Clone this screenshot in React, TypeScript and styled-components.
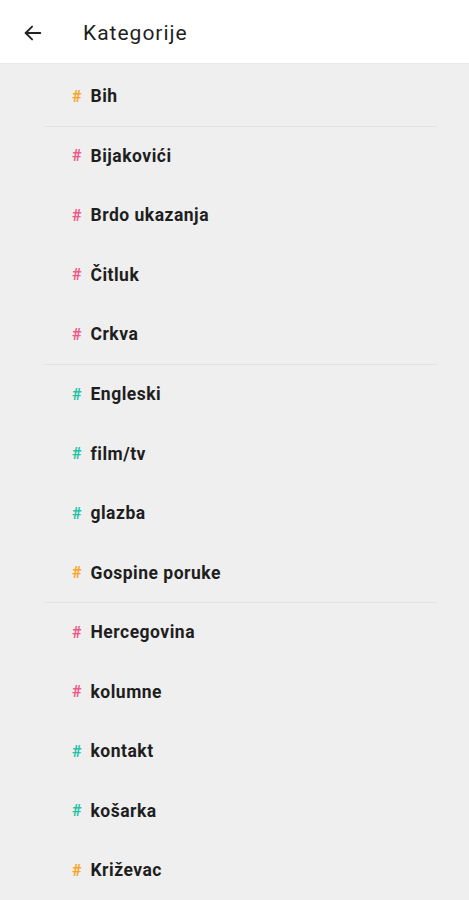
import React from "react";
import styled, { createGlobalStyle } from "styled-components";

const Global = createGlobalStyle`
  html, body { margin: 0; padding: 0; background: #efefef; }
  body { font-family: Roboto, "Noto Sans", "Liberation Sans", sans-serif; }
`;

const Page = styled.div`
  width: 469px;
  min-height: 900px;
  background: #efefef;
  display: flex;
  flex-direction: column;
`;

const Header = styled.header`
  height: 64px;
  background: #ffffff;
  display: flex;
  align-items: center;
  padding: 2px 0 0 20px;
  box-sizing: border-box;
  border-bottom: 1px solid #e9e9e9;
`;

const BackButton = styled.button`
  width: 26px;
  height: 26px;
  padding: 0;
  border: none;
  background: none;
  display: flex;
  align-items: center;
  justify-content: center;
  margin-right: 37px;
`;

const Title = styled.h1`
  margin: 0;
  font-size: 21px;
  font-weight: 400;
  color: #1f1f1f;
  letter-spacing: 1px;
`;

const List = styled.ul`
  list-style: none;
  margin: 0;
  padding: 3px 0 0 0;
  display: flex;
  flex-direction: column;
`;

const Row = styled.li<{ $divider?: boolean }>`
  height: 59.55px;
  margin: 0 32px 0 44px;
  padding-left: 28px;
  box-sizing: border-box;
  display: flex;
  align-items: center;
  border-bottom: 1px solid ${(p) => (p.$divider ? "#e3e3e3" : "transparent")};
`;

const Hash = styled.span<{ $color: string }>`
  color: ${(p) => p.$color};
  font-size: 16px;
  font-weight: 700;
  margin-right: 9px;
`;

const Label = styled.span`
  font-size: 17.5px;
  font-weight: 700;
  color: #1e1e1e;
  letter-spacing: 0.5px;
`;

const ORANGE = "#f6a52b";
const PINK = "#ec5b88";
const TEAL = "#26c2a6";

const items: { name: string; color: string; divider?: boolean }[] = [
  { name: "Bih", color: ORANGE, divider: true },
  { name: "Bijakovići", color: PINK },
  { name: "Brdo ukazanja", color: PINK },
  { name: "Čitluk", color: PINK },
  { name: "Crkva", color: PINK, divider: true },
  { name: "Engleski", color: TEAL },
  { name: "film/tv", color: TEAL },
  { name: "glazba", color: TEAL },
  { name: "Gospine poruke", color: ORANGE, divider: true },
  { name: "Hercegovina", color: PINK },
  { name: "kolumne", color: PINK },
  { name: "kontakt", color: TEAL },
  { name: "košarka", color: TEAL },
  { name: "Križevac", color: ORANGE },
];

export default function App() {
  return (
    <>
      <Global />
      <Page>
        <Header>
          <BackButton aria-label="Natrag">
            <svg width="22" height="22" viewBox="0 0 24 24" fill="none" stroke="#222" strokeWidth="2" strokeLinecap="round" strokeLinejoin="round">
              <path d="M20 12H4" />
              <path d="M11 5l-7 7 7 7" />
            </svg>
          </BackButton>
          <Title>Kategorije</Title>
        </Header>
        <List>
          {items.map((it) => (
            <Row key={it.name} $divider={it.divider}>
              <Hash $color={it.color}>#</Hash>
              <Label>{it.name}</Label>
            </Row>
          ))}
        </List>
      </Page>
    </>
  );
}
